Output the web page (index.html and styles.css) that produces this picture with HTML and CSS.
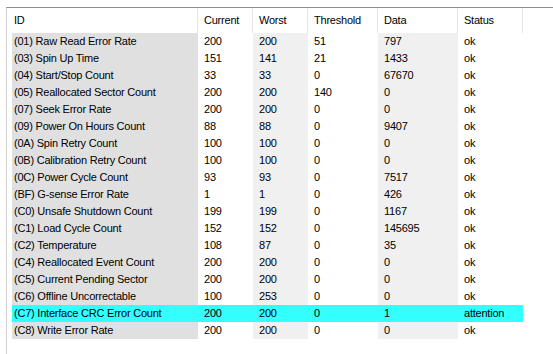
FILE: index.html
```html
<!DOCTYPE html>
<html>
<head>
<meta charset="utf-8">
<link rel="stylesheet" href="styles.css">
</head>
<body>
<div class="list">
  <div class="head">
    <div class="hc hid">ID</div>
    <div class="hc">Current</div>
    <div class="hc">Worst</div>
    <div class="hc">Threshold</div>
    <div class="hc">Data</div>
    <div class="hc">Status</div>
  </div>
  <div class="rows">
    <div class="row"><div class="c id">(01) Raw Read Error Rate</div><div class="c">200</div><div class="c alt">200</div><div class="c">51</div><div class="c alt">797</div><div class="c">ok</div></div>
    <div class="row"><div class="c id">(03) Spin Up Time</div><div class="c">151</div><div class="c alt">141</div><div class="c">21</div><div class="c alt">1433</div><div class="c">ok</div></div>
    <div class="row"><div class="c id">(04) Start/Stop Count</div><div class="c">33</div><div class="c alt">33</div><div class="c">0</div><div class="c alt">67670</div><div class="c">ok</div></div>
    <div class="row"><div class="c id">(05) Reallocated Sector Count</div><div class="c">200</div><div class="c alt">200</div><div class="c">140</div><div class="c alt">0</div><div class="c">ok</div></div>
    <div class="row"><div class="c id">(07) Seek Error Rate</div><div class="c">200</div><div class="c alt">200</div><div class="c">0</div><div class="c alt">0</div><div class="c">ok</div></div>
    <div class="row"><div class="c id">(09) Power On Hours Count</div><div class="c">88</div><div class="c alt">88</div><div class="c">0</div><div class="c alt">9407</div><div class="c">ok</div></div>
    <div class="row"><div class="c id">(0A) Spin Retry Count</div><div class="c">100</div><div class="c alt">100</div><div class="c">0</div><div class="c alt">0</div><div class="c">ok</div></div>
    <div class="row"><div class="c id">(0B) Calibration Retry Count</div><div class="c">100</div><div class="c alt">100</div><div class="c">0</div><div class="c alt">0</div><div class="c">ok</div></div>
    <div class="row"><div class="c id">(0C) Power Cycle Count</div><div class="c">93</div><div class="c alt">93</div><div class="c">0</div><div class="c alt">7517</div><div class="c">ok</div></div>
    <div class="row"><div class="c id">(BF) G-sense Error Rate</div><div class="c">1</div><div class="c alt">1</div><div class="c">0</div><div class="c alt">426</div><div class="c">ok</div></div>
    <div class="row"><div class="c id">(C0) Unsafe Shutdown Count</div><div class="c">199</div><div class="c alt">199</div><div class="c">0</div><div class="c alt">1167</div><div class="c">ok</div></div>
    <div class="row"><div class="c id">(C1) Load Cycle Count</div><div class="c">152</div><div class="c alt">152</div><div class="c">0</div><div class="c alt">145695</div><div class="c">ok</div></div>
    <div class="row"><div class="c id">(C2) Temperature</div><div class="c">108</div><div class="c alt">87</div><div class="c">0</div><div class="c alt">35</div><div class="c">ok</div></div>
    <div class="row"><div class="c id">(C4) Reallocated Event Count</div><div class="c">200</div><div class="c alt">200</div><div class="c">0</div><div class="c alt">0</div><div class="c">ok</div></div>
    <div class="row"><div class="c id">(C5) Current Pending Sector</div><div class="c">200</div><div class="c alt">200</div><div class="c">0</div><div class="c alt">0</div><div class="c">ok</div></div>
    <div class="row"><div class="c id">(C6) Offline Uncorrectable</div><div class="c">100</div><div class="c alt">253</div><div class="c">0</div><div class="c alt">0</div><div class="c">ok</div></div>
    <div class="row warn"><div class="c id">(C7) Interface CRC Error Count</div><div class="c">200</div><div class="c alt">200</div><div class="c">0</div><div class="c alt">1</div><div class="c">attention</div></div>
    <div class="row"><div class="c id">(C8) Write Error Rate</div><div class="c">200</div><div class="c alt">200</div><div class="c">0</div><div class="c alt">0</div><div class="c">ok</div></div>
  </div>
</div>
</body>
</html>
```

FILE: styles.css
```css
html, body {
  margin: 0;
  padding: 0;
  background: #ffffff;
}

body {
  font-family: "Liberation Sans", Arial, sans-serif;
  font-size: 11px;
  letter-spacing: -0.22px;
  color: #000000;
  overflow: hidden;
}

.list {
  box-sizing: border-box;
  margin-top: 7px;
  margin-left: 6px;
  height: 347px;
  border-top: 1px solid #8c8c8c;
  border-left: 1px solid #d2d2d2;
  background: #ffffff;
}

.head {
  display: grid;
  grid-template-columns: 191px 55px 55px 70px 80px 65px;
  height: 25px;
}

.hc {
  line-height: 25px;
  padding-left: 6px;
  border-right: 1px solid #e5e5e5;
  white-space: nowrap;
}

.hc.hid {
  padding-left: 7px;
}

.rows {
  display: flex;
  flex-direction: column;
  padding-left: 5px;
}

.row {
  display: grid;
  grid-template-columns: 186px 55px 55px 70px 80px 65px;
  height: 17px;
}

.c {
  line-height: 17px;
  padding-left: 6px;
  white-space: nowrap;
  overflow: hidden;
}

.c.id {
  background: #e0e0e0;
  padding-left: 2px;
}

.c.alt {
  background: #f0f0f0;
}

.row.warn .c {
  background: #33ffff;
}
```
